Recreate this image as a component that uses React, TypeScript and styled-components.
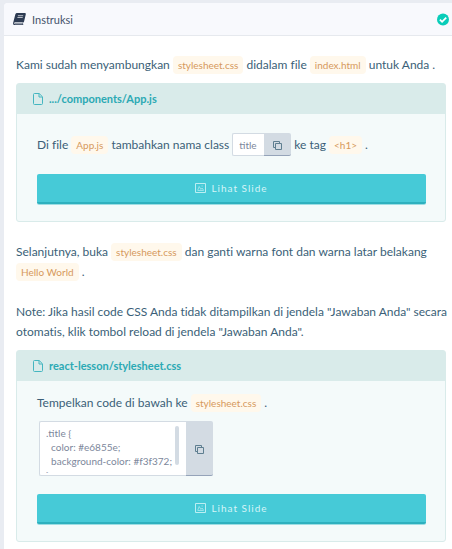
import React from 'react';
import styled, { createGlobalStyle } from 'styled-components';

const GlobalStyle = createGlobalStyle`
  *, *::before, *::after { box-sizing: border-box; }
  body {
    margin: 0;
    background: #e9ecf2;
    color: #3b5f78;
    font: 12px/20px Lato, "Liberation Sans", sans-serif;
    font-variant-ligatures: none;
    overflow: hidden;
  }
`;

const Panel = styled.main`
  margin: 3px 0 0 4px;
  min-height: calc(100vh - 3px);
  background: #fff;
  border-top-left-radius: 4px;
`;

const PanelHeader = styled.header`
  display: flex;
  align-items: center;
  gap: 6px;
  height: 33px;
  padding: 0 3px 0 9px;
  background: #f8f9fd;
  border-bottom: 1px solid #e6e9ee;
  border-top-left-radius: 4px;
`;

const PanelTitle = styled.h1`
  flex: 1;
  margin: 0;
  padding-top: 2px;
  color: #46536b;
  font-size: 11px;
  font-weight: 400;
  line-height: 16px;
`;

const PanelBody = styled.div`
  display: flex;
  flex-direction: column;
  gap: 20px;
  padding: 19px 0 8px 12px;
`;

const Step = styled.section`
  display: flex;
  flex-direction: column;
  gap: 8px;
`;

const Text = styled.p`
  margin: 0;
`;

const Code = styled.code`
  display: inline-block;
  height: 18px;
  padding: 0 5px;
  border-radius: 4px;
  background: #fff8ec;
  color: #d6995c;
  font: 10px/18px Lato, "Liberation Sans", sans-serif;
`;

const Card = styled.article`
  margin-right: 6px;
  border: 1px solid #d9ebea;
  border-radius: 3px;
  background: #f4fafa;
`;

const CardHeader = styled.h2`
  display: flex;
  align-items: center;
  gap: 6px;
  height: 30px;
  margin: 0;
  padding: 0 16px;
  background: #d9ebea;
  color: #2ba9b4;
  font-size: 11px;
  font-weight: 700;
`;

const CardBody = styled.div<{ $top: number }>`
  padding: ${({ $top }) => $top}px 19px 17px 20px;
`;

const InlineRow = styled.div`
  display: flex;
  align-items: center;
  height: 23px;
  white-space: pre;
`;

const CopyGroup = styled.span<{ $block?: boolean }>`
  display: ${({ $block }) => ($block ? 'flex' : 'inline-flex')};
  width: ${({ $block }) => ($block ? '174px' : '59px')};
  height: ${({ $block }) => ($block ? '55px' : '23px')};
  margin: ${({ $block }) => ($block ? '8px 0 0 2px' : '0 3px')};
`;

const fieldFont = `
  color: #7c879b;
  font: 10px/14px Lato, "Liberation Sans", sans-serif;
  border: 1px solid #d3dbe3;
  border-right: 0;
  border-radius: 2px 0 0 2px;
  background: #fff;
  outline: none;
`;

const CopyInput = styled.input`
  ${fieldFont}
  flex: 1;
  min-width: 0;
  padding: 0 0 0 6px;
`;

const SnippetFrame = styled.div`
  ${fieldFont}
  position: relative;
  flex: 1;
  display: flex;
  min-width: 0;
  padding: 4px 7px 0 6px;
`;

const ScrollThumb = styled.span`
  position: absolute;
  top: 4px;
  right: 7px;
  width: 4px;
  height: 39px;
  border-radius: 2px;
  background: #d3dbe3;
  pointer-events: none;
`;

const SnippetArea = styled.textarea`
  flex: 1;
  min-width: 0;
  height: 47px;
  padding: 0;
  border: 0;
  outline: none;
  resize: none;
  background: transparent;
  color: inherit;
  font: inherit;
  white-space: pre;
  overflow-x: hidden;
  overflow-y: auto;
  scrollbar-width: none;
`;

const CopyButton = styled.button`
  display: flex;
  align-items: center;
  justify-content: center;
  width: 27px;
  padding: 2px 0 0;
  border: 0;
  border-bottom: 1px solid #95a3b9;
  border-radius: 0 2px 2px 0;
  background: #d3dbe3;
  color: #5e7e90;
  cursor: pointer;
`;

const SlideButton = styled.button`
  display: flex;
  align-items: center;
  justify-content: center;
  gap: 5px;
  width: 100%;
  height: 30px;
  margin-top: 18px;
  padding: 0;
  border: 0;
  border-bottom: 2px solid #2eb0be;
  border-radius: 2px;
  background: #46cad7;
  box-shadow: 0 1px 0 #9edde3;
  color: #d5f5f8;
  font: 10px/16px Lato, "Liberation Sans", sans-serif;
  letter-spacing: 1px;
  cursor: pointer;
`;

const BookIcon = () => (
  <svg width="13" height="12" viewBox="0 0 13 12" aria-hidden="true">
    <path fill="#2d3b52" d="M4.2 0h7.6c.8 0 1.2.5 1 1.2L11 8.7c-.1.5-.4.8-.9.9l-.2 1.1h.3V12H1.8C.5 12-.2 11 .1 9.9L2.3 1.5C2.6.5 3.2 0 4.2 0z" />
    <path fill="none" stroke="#f8f9fd" strokeWidth=".7" d="M4.900 2.700h5.300M4.400 4.500h5.300M9.800 9.500H2c-.9.100-.9 1.200 0 1.300h7.700" />
  </svg>
);

const CheckIcon = () => (
  <svg width="12" height="13" viewBox="0 0 12 12" role="img" aria-label="Selesai">
    <circle cx="6" cy="6" r="6" fill="#09cdb9" />
    <path d="m2.900 6.100 2.200 2.200 4.100-4.100" fill="none" stroke="#fff" strokeWidth="1.800" />
  </svg>
);

const FileIcon = () => (
  <svg width="10" height="12" viewBox="0 0 10 12" fill="none" stroke="#45b6c0" aria-hidden="true">
    <path d="M1.500.5h4.700l3.300 3.300v6.700a1 1 0 0 1-1 1h-7a1 1 0 0 1-1-1v-9a1 1 0 0 1 1-1z" />
    <path d="M6 .8V4h3.300" />
  </svg>
);

const CopyIcon = () => (
  <svg width="9" height="9" viewBox="0 0 9 9" fill="none" stroke="currentColor" aria-hidden="true">
    <path d="M2.500 2.500h6v6h-6zM2.500 6.500h-2v-6h6v2" />
  </svg>
);

const SlideIcon = () => (
  <svg width="11" height="10" viewBox="0 0 11 10" fill="none" stroke="#bceef2" aria-hidden="true">
    <path d="M.5.5h10v9H.5z" />
    <path d="M2.500 7.500h6.200M2.800 7l1.400-3.500 1.700 2.900 1.200-1.400 1.400 2.200M6.500 3h1.200" strokeWidth=".7" />
  </svg>
);

const Slide = () => (
  <SlideButton type="button">
    <SlideIcon />
    Lihat Slide
  </SlideButton>
);

const Copy = () => (
  <CopyButton type="button" aria-label="Salin">
    <CopyIcon />
  </CopyButton>
);

const snippet = `.title {
  color: #e6855e;
  background-color: #f3f372;
}`;

export default function App() {
  return (
    <>
      <GlobalStyle />
      <Panel>
        <PanelHeader>
          <BookIcon />
          <PanelTitle>Instruksi</PanelTitle>
          <CheckIcon />
        </PanelHeader>
        <PanelBody>
          <Step>
            <Text>
              Kami sudah menyambungkan <Code>stylesheet.css</Code> didalam file <Code>index.html</Code> untuk Anda .
            </Text>
            <Card>
              <CardHeader>
                <FileIcon />
                .../components/App.js
              </CardHeader>
              <CardBody $top={19}>
                <InlineRow>
                  <span>Di file <Code>App.js</Code> tambahkan nama class</span>
                  <CopyGroup>
                    <CopyInput aria-label="Nama class" value="title" readOnly />
                    <Copy />
                  </CopyGroup>
                  <span>ke tag <Code>{'<h1>'}</Code> .</span>
                </InlineRow>
                <Slide />
              </CardBody>
            </Card>
          </Step>
          <Text>
            Selanjutnya, buka <Code>stylesheet.css</Code> dan ganti warna font dan warna latar belakang{' '}
            <Code>Hello World</Code> .
          </Text>
          <Step>
            <Text>
              Note: Jika hasil code CSS Anda tidak ditampilkan di jendela "Jawaban Anda" secara otomatis, klik tombol
              reload di jendela "Jawaban Anda".
            </Text>
            <Card>
              <CardHeader>
                <FileIcon />
                react-lesson/stylesheet.css
              </CardHeader>
              <CardBody $top={12}>
                <Text>
                  Tempelkan code di bawah ke <Code>stylesheet.css</Code> .
                </Text>
                <CopyGroup $block>
                  <SnippetFrame>
                    <SnippetArea aria-label="Kode CSS" value={snippet} readOnly />
                    <ScrollThumb />
                  </SnippetFrame>
                  <Copy />
                </CopyGroup>
                <Slide />
              </CardBody>
            </Card>
          </Step>
        </PanelBody>
      </Panel>
    </>
  );
}
